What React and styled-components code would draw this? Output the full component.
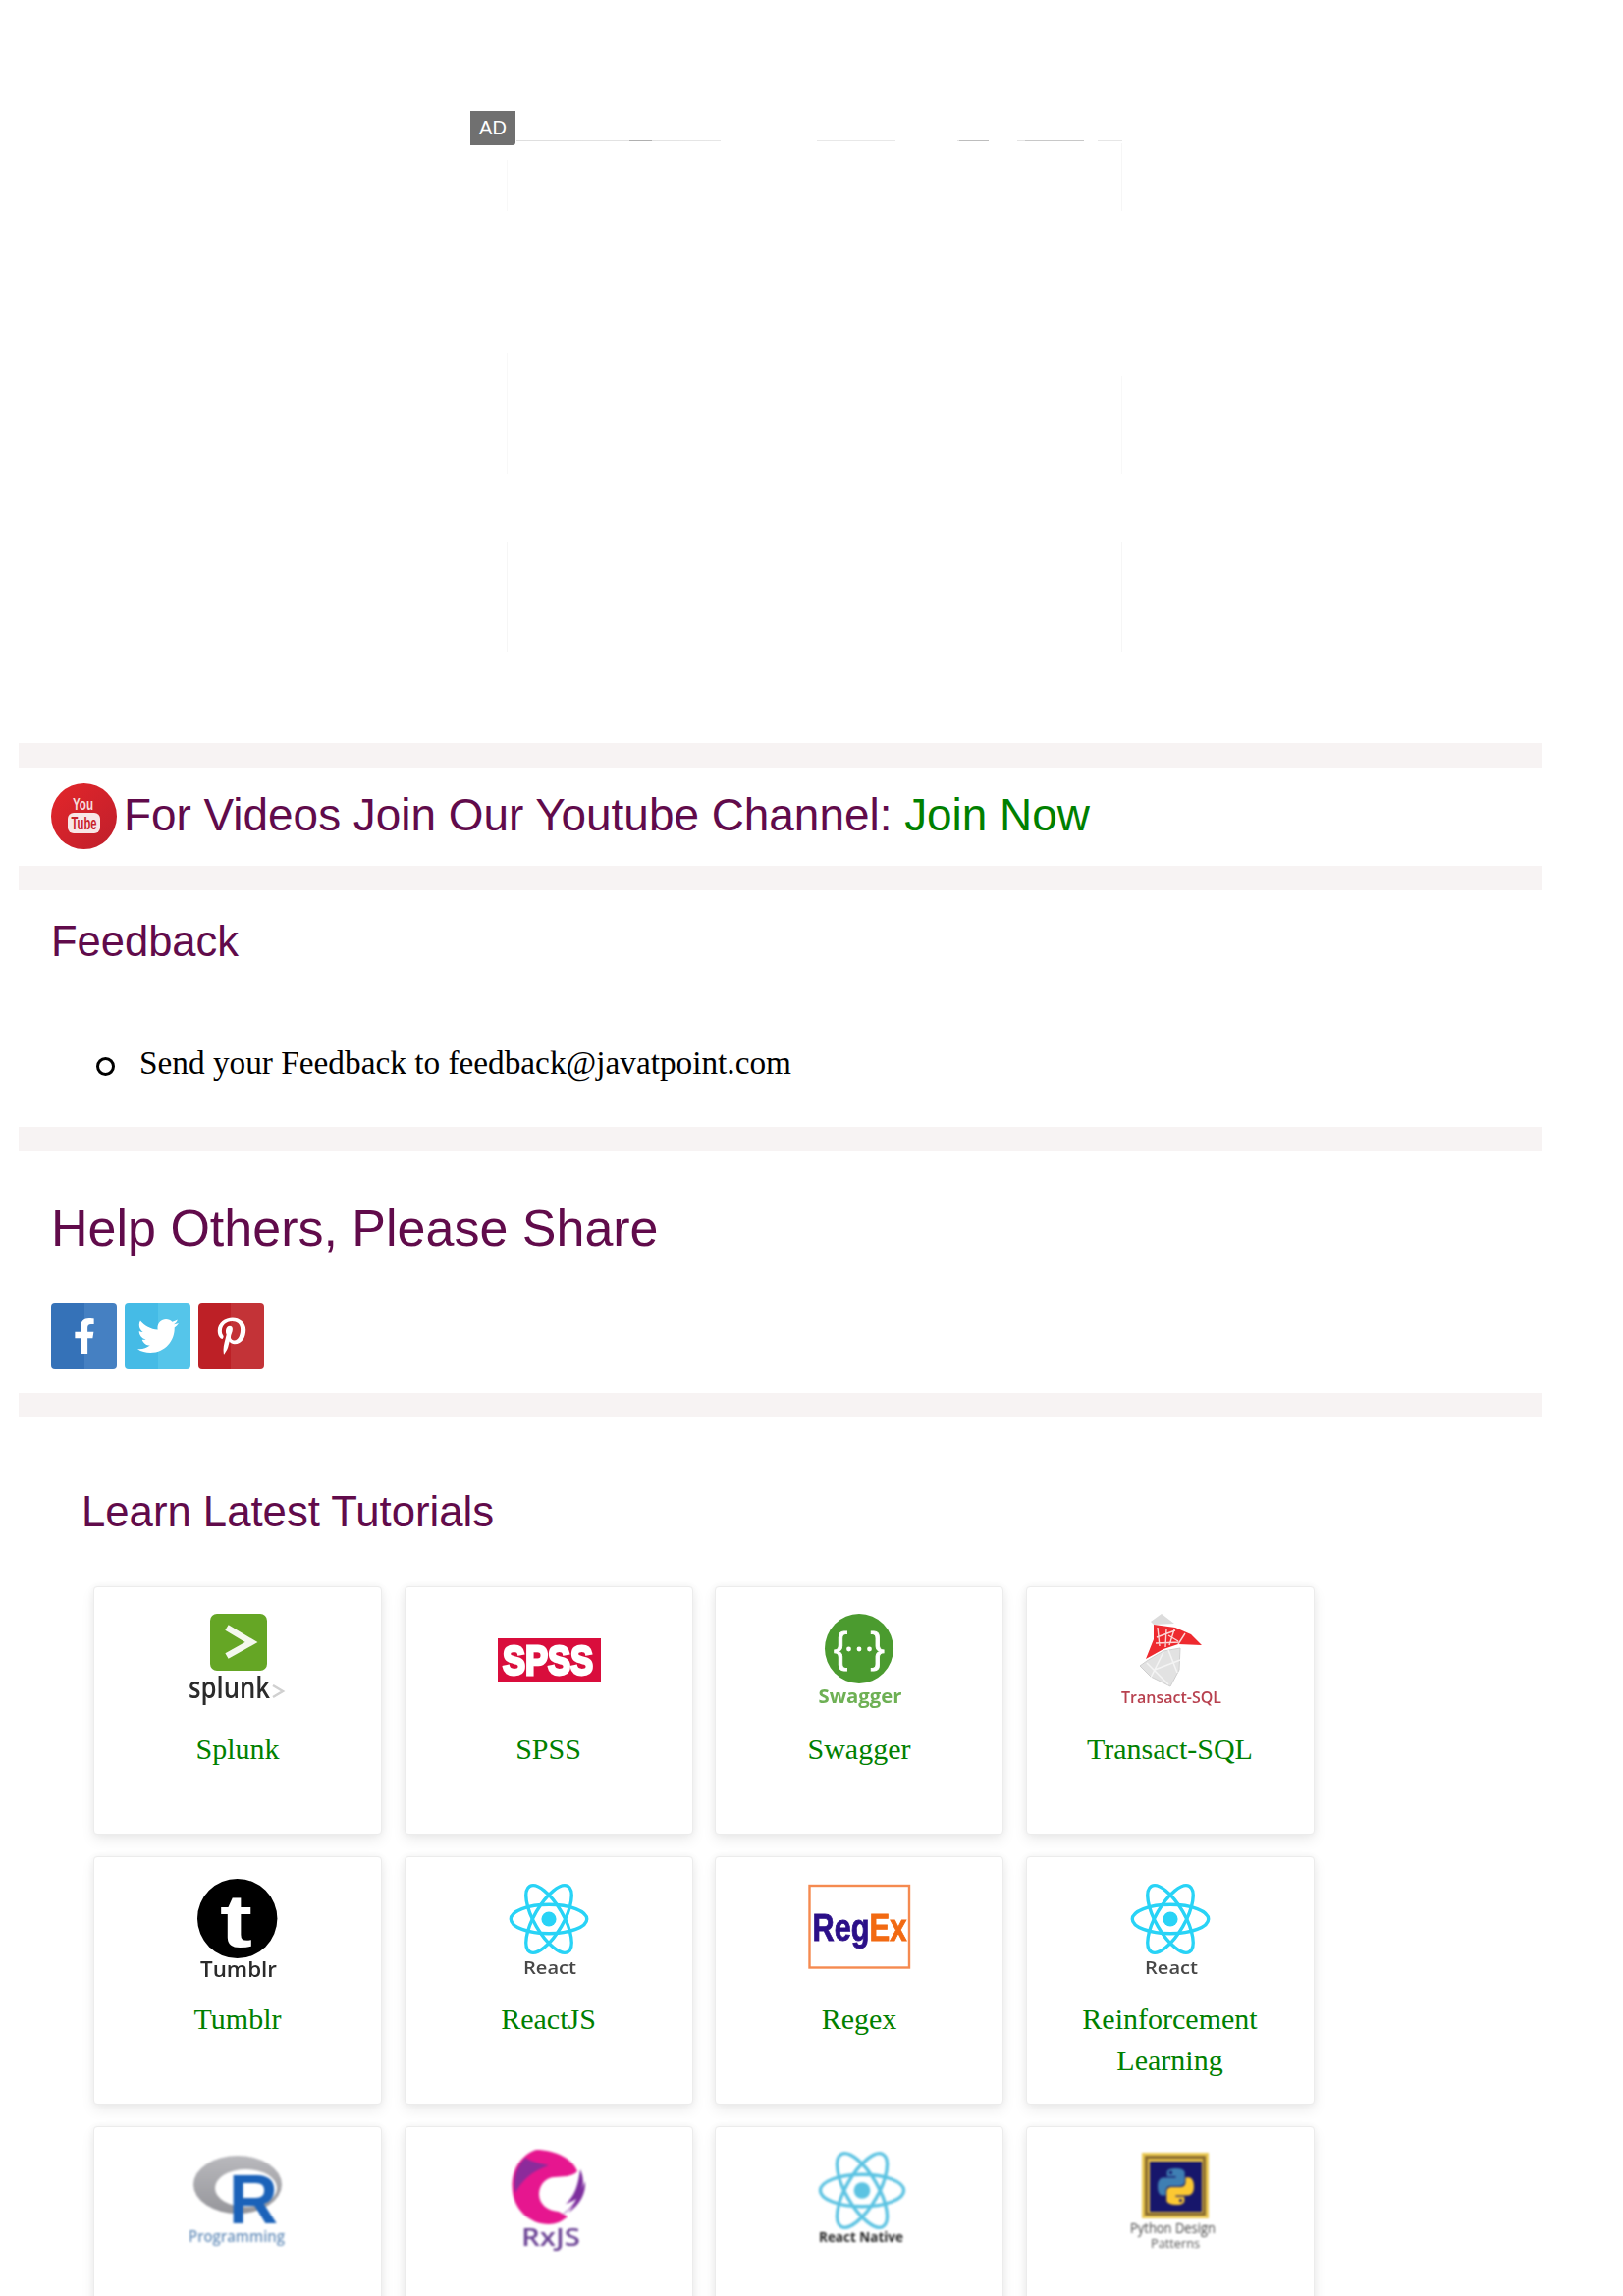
import React from "react";
import styled, { createGlobalStyle } from "styled-components";
import { FaFacebookF, FaTwitter, FaPinterestP } from "react-icons/fa";

const Global = createGlobalStyle`
  html, body { margin: 0; padding: 0; background: #fff; }
  * { box-sizing: border-box; }
`;

const Page = styled.div`
  height: 2339px;
  overflow: hidden;
  padding-top: 143px;
  font-family: "Liberation Serif", "Times New Roman", serif;
  color: #000;
`;

const AdWrap = styled.div`
  position: relative;
  width: 627px;
  height: 521px;
  margin: 0 0 93px 516px;
  background:
    linear-gradient(90deg,
      transparent 125px, #b0b0b0 125px, #b0b0b0 148px, transparent 148px,
      transparent 461px, #bdbdbd 461px, #bdbdbd 491px, transparent 491px,
      transparent 528px, #c8c8c8 528px, #c8c8c8 588px, transparent 588px) top left / 100% 1px no-repeat,
    linear-gradient(90deg,
      transparent 10px, #dedede 10px, #e6e6e6 218px, transparent 218px,
      transparent 316px, #e8e8e8 316px, #e8e8e8 396px, transparent 396px,
      transparent 459px, #e4e4e4 459px, #e4e4e4 488px, transparent 488px,
      transparent 520px, #e4e4e4 520px, #e4e4e4 574px, transparent 574px,
      transparent 602px, #e6e6e6 602px) top left / 100% 1px no-repeat,
    linear-gradient(180deg,
      transparent 20px, #f8f8f8 20px, #f8f8f8 72px, transparent 72px,
      transparent 217px, #f8f8f8 217px, #f8f8f8 340px, transparent 340px,
      transparent 409px, #f6f6f6 409px, #f6f6f6 521px) top left / 1px 100% no-repeat,
    linear-gradient(180deg,
      transparent 3px, #f6f6f6 3px, #f6f6f6 72px, transparent 72px,
      transparent 240px, #f8f8f8 240px, #f8f8f8 340px, transparent 340px,
      transparent 409px, #f6f6f6 409px, #f6f6f6 521px) top right / 1px 100% no-repeat;
`;

const AdBadge = styled.div`
  position: absolute;
  left: -37px;
  top: -30px;
  width: 46px;
  height: 35px;
  background: #707070;
  color: #fff;
  border-bottom-right-radius: 3px;
  font: 20px/35px "Liberation Sans", Arial, sans-serif;
  text-align: center;
`;

const Band = styled.div`
  width: 1552px;
  height: 25px;
  margin-left: 19px;
  background: #f7f3f3;
`;

const VideoRow = styled.div`
  display: flex;
  align-items: flex-start;
  height: 100px;
  padding: 16px 0 0 52px;
`;

const YoutubeMark = styled.svg`
  width: 67px;
  height: 67px;
  flex: none;
`;

const VideoText = styled.h2`
  margin: 6px 0 0 7px;
  font: 400 45.9px/52px "Liberation Sans", Arial, sans-serif;
  color: #610b4b;
  white-space: nowrap;
`;

const JoinLink = styled.a`
  color: #008000;
`;

const Heading = styled.h2`
  margin: ${(p) => p.$top}px 0 0 ${(p) => p.$left}px;
  font: 400 ${(p) => p.$size}px/1 "Liberation Sans", Arial, sans-serif;
  color: #610b4b;
`;

const FeedbackList = styled.ul`
  margin: 80px 0 44px 0;
  padding: 0 0 0 142px;
  list-style: none;
`;

const FeedbackItem = styled.li`
  position: relative;
  font-size: 33.3px;
  line-height: 42px;

  &::before {
    content: "";
    position: absolute;
    left: -44px;
    top: 15.5px;
    width: 13px;
    height: 13px;
    border: 3px solid #000;
    border-radius: 50%;
  }
`;

const ShareRow = styled.div`
  display: flex;
  gap: 8px;
  margin: 50px 0 24px 52px;
`;

const ShareButton = styled.a`
  display: flex;
  align-items: center;
  justify-content: center;
  width: 67px;
  height: 68px;
  border-radius: 4px;
  color: #fff;
  font-size: ${(p) => p.$icon}px;
  background: linear-gradient(90deg, ${(p) => p.$left} 50%, ${(p) => p.$right} 50%);
`;

const CardGrid = styled.div`
  display: grid;
  grid-template-columns: repeat(4, 294px);
  grid-auto-rows: 253px;
  column-gap: 22.5px;
  row-gap: 22px;
  margin: 55px 0 0 95px;
`;

const Card = styled.a`
  display: block;
  padding: 20px 12px 0;
  background: #fff;
  border: 1px solid #ececec;
  border-radius: 4px;
  box-shadow: 0 6px 14px rgba(0, 0, 0, 0.07), 0 0 7px rgba(0, 0, 0, 0.05);
  text-align: center;
`;

const LogoSvg = styled.svg`
  display: block;
  width: 160px;
  height: 110px;
  margin: 0 auto 14px;
  filter: blur(${(p) => p.$blur || 0.45}px);
  overflow: visible;
`;

const CardLabel = styled.div`
  font-size: 30px;
  line-height: 42px;
  color: #008000;
`;

const SANS = '"Open Sans", "Noto Sans", sans-serif';
const ARIAL = '"Liberation Sans", Arial, sans-serif';

const Atom = ({ cx, cy, k, color, sw }) => (
  <g fill="none" stroke={color} strokeWidth={sw}>
    <ellipse cx={cx} cy={cy} rx={11 * k} ry={4.2 * k} />
    <ellipse cx={cx} cy={cy} rx={11 * k} ry={4.2 * k} transform={`rotate(60 ${cx} ${cy})`} />
    <ellipse cx={cx} cy={cy} rx={11 * k} ry={4.2 * k} transform={`rotate(120 ${cx} ${cy})`} />
    <circle cx={cx} cy={cy} r={2.15 * k} fill={color} stroke="none" />
  </g>
);

const SplunkLogo = () => (
  <LogoSvg viewBox="162 1636 160 110">
    <rect x="214" y="1643" width="58" height="58" rx="7" fill="#65a625" />
    <polyline points="231,1657 256,1672 231,1686" fill="none" stroke="#f4f8ee" strokeWidth="6.5" />
    <text x="192" y="1729" fontFamily={SANS} fontSize="30" fontWeight="600" fill="#2b2b2b" textLength="83" lengthAdjust="spacingAndGlyphs">splunk</text>
    <polyline points="278,1716 288,1722 278,1728" fill="none" stroke="#d0d0d0" strokeWidth="2.5" />
  </LogoSvg>
);

const SpssLogo = () => (
  <LogoSvg viewBox="478 1636 160 110">
    <rect x="506" y="1668" width="105" height="44" fill="#d90d3c" />
    <text x="511" y="1705" fontFamily={ARIAL} fontSize="42" fontWeight="700" fill="#fff" stroke="#fff" strokeWidth="3" textLength="92" lengthAdjust="spacingAndGlyphs">SPSS</text>
  </LogoSvg>
);

const SwaggerLogo = () => (
  <LogoSvg viewBox="795.5 1636 160 110">
    <ellipse cx="875.5" cy="1678.5" rx="35" ry="35.5" fill="#4b9b2f" />
    <text x="849.5" y="1692" fontFamily={ARIAL} fontSize="43" fill="#fff" stroke="#fff" strokeWidth="0.8">{"{"}</text>
    <text x="887" y="1692" fontFamily={ARIAL} fontSize="43" fill="#fff" stroke="#fff" strokeWidth="0.8">{"}"}</text>
    <circle cx="865" cy="1679" r="2.4" fill="#fff" />
    <circle cx="875.5" cy="1679" r="2.4" fill="#fff" />
    <circle cx="886" cy="1679" r="2.4" fill="#fff" />
    <text x="834" y="1734" fontFamily={SANS} fontSize="20" fontWeight="700" fill="#6eb054" textLength="85" lengthAdjust="spacingAndGlyphs">Swagger</text>
  </LogoSvg>
);

const TransactLogo = () => (
  <LogoSvg viewBox="1112 1636 160 110">
    <path d="M1172 1651 L1183 1643 L1196 1653 L1175 1654 Z" fill="#dcdcdc" />
    <path d="M1168 1691 L1185 1681 L1202 1678 L1201 1700 L1192 1717 L1172 1707 L1161 1696 Z" fill="#e2e2e2" stroke="#cfcfcf" strokeWidth="1" />
    <path d="M1168 1693 L1190 1715 M1185 1682 L1172 1708 M1202 1690 L1176 1700 M1190 1680 L1199 1703" stroke="#f4f4f4" strokeWidth="1.6" fill="none" />
    <path d="M1175 1654 L1197 1657 L1213 1664 L1224 1675 L1200 1674 L1185 1679 L1167 1689 L1175 1669 Z" fill="#ee2a2f" />
    <path d="M1179 1657 L1181 1676 M1188 1658 L1187 1677 M1178 1667 L1197 1660 M1177 1673 L1202 1672 M1196 1659 L1191 1675 M1207 1663 L1200 1674 M1190 1665 L1200 1671" stroke="#fbd6d6" strokeWidth="1.4" fill="none" />
    <text x="1142" y="1734" fontFamily={SANS} fontSize="17" fontWeight="600" fill="#b8414f" textLength="102" lengthAdjust="spacingAndGlyphs">Transact-SQL</text>
  </LogoSvg>
);

const TumblrLogo = () => (
  <LogoSvg viewBox="162 1912 160 110">
    <ellipse cx="241.7" cy="1954.5" rx="40.7" ry="40.5" fill="#000" />
    <text x="224" y="1983" fontFamily={ARIAL} fontSize="76" fontWeight="700" fill="#fff" textLength="33" lengthAdjust="spacingAndGlyphs">t</text>
    <text x="204" y="2014" fontFamily={SANS} fontSize="22" fontWeight="600" fill="#2a2a2a" textLength="78" lengthAdjust="spacingAndGlyphs">Tumblr</text>
  </LogoSvg>
);

const ReactLogo = ({ center, textX }) => (
  <LogoSvg viewBox={`${center - 80} 1912 160 110`}>
    <Atom cx={center} cy={1955} k={3.52} color="#28d3f6" sw={3.4} />
    <text x={textX} y="2011" fontFamily={SANS} fontSize="18" fontWeight="600" fill="#484848" textLength="54" lengthAdjust="spacingAndGlyphs">React</text>
  </LogoSvg>
);

const RegexLogo = () => (
  <LogoSvg viewBox="795.5 1912 160 110">
    <rect x="825" y="1921" width="101.5" height="83.5" fill="none" stroke="#f58a50" strokeWidth="2.4" />
    <text x="828" y="1977" fontFamily={ARIAL} fontSize="38" fontWeight="700" fill="#2b0f88" stroke="#2b0f88" strokeWidth="0.9" textLength="58" lengthAdjust="spacingAndGlyphs">Reg</text>
    <text x="886" y="1977" fontFamily={ARIAL} fontSize="38" fontWeight="700" fill="#f26a12" stroke="#f26a12" strokeWidth="0.9" textLength="38" lengthAdjust="spacingAndGlyphs">Ex</text>
  </LogoSvg>
);

const RLogo = () => (
  <LogoSvg $blur={0.8} viewBox="162 2187 160 110">
    <defs>
      <linearGradient id="rRing" x1="0" y1="0" x2="0" y2="1">
        <stop offset="0" stopColor="#b9b9bd" />
        <stop offset="1" stopColor="#96969b" />
      </linearGradient>
    </defs>
    <ellipse cx="242" cy="2225.5" rx="45" ry="29.5" fill="url(#rRing)" />
    <ellipse cx="250.5" cy="2229" rx="31.5" ry="19" fill="#fff" />
    <text x="233" y="2265" fontFamily={ARIAL} fontSize="70" fontWeight="700" fill="#1b62b9" textLength="50" lengthAdjust="spacingAndGlyphs">R</text>
    <text x="192" y="2284" fontFamily={SANS} fontSize="16" fontWeight="600" fill="#6c93bd" textLength="98" lengthAdjust="spacingAndGlyphs">Programming</text>
  </LogoSvg>
);

const RxLogo = () => (
  <LogoSvg $blur={0.8} viewBox="478 2187 160 110">
    <path d="M587 2212 C583 2200 565 2190 545 2190 C530 2195 520 2210 520.6 2228 C521 2250 538 2266 558 2266 C565 2266 572 2263 577 2258 L568 2253 C556 2252 548 2245 548 2235 C548 2225 556 2218 564 2218 C572 2217 582 2218 587 2212 Z" fill="#e6168f" />
    <path d="M534 2198 C525 2208 521 2220 524 2234 C530 2222 540 2212 558 2206 C548 2204 540 2202 534 2198 Z" fill="#7b2f9d" opacity="0.85" />
    <path d="M590 2210 C597 2225 592 2244 570 2257 C577 2251 583 2247 586 2240 C581 2243 578 2244 575 2245 C582 2239 587 2232 590 2210 Z" fill="#7d2f9e" />
    <path d="M595 2222 C596 2234 590 2246 578 2254 C584 2246 590 2236 595 2222 Z" fill="#7d2f9e" />
    <text x="530" y="2288" fontFamily={SANS} fontSize="26" fontWeight="600" fill="#6d4596" textLength="60" lengthAdjust="spacingAndGlyphs">RxJS</text>
  </LogoSvg>
);

const NativeLogo = () => (
  <LogoSvg $blur={0.8} viewBox="795.5 2187 160 110">
    <Atom cx={878.5} cy={2231.5} k={3.87} color="#5cc3e2" sw={3.4} />
    <text x="834.5" y="2284" fontFamily={SANS} fontSize="15" fontWeight="700" fill="#222" textLength="86" lengthAdjust="spacingAndGlyphs">React Native</text>
  </LogoSvg>
);

const PYTHON_HALF = "M54.9 0C27 0 28.7 12.1 28.7 12.1v12.5h26.6v3.8H18.1S0 26.4 0 54.8s15.8 27.4 15.8 27.4h9.4V69s-.5-15.8 15.6-15.8h26.6s15 .2 15-14.5V14.4S84.9 0 54.9 0zM40 8.5a4.8 4.8 0 1 1 0 9.6 4.8 4.8 0 0 1 0-9.6z";

const PythonLogo = () => (
  <LogoSvg $blur={0.8} viewBox="1112 2187 160 110">
    <rect x="1163" y="2193" width="68" height="67" fill="#e9c74f" />
    <rect x="1166" y="2196" width="62" height="61" fill="#8a6c2e" />
    <rect x="1169" y="2199" width="56" height="55" fill="#e4bf48" />
    <rect x="1171" y="2202" width="53" height="51" fill="#17166b" />
    <g transform="translate(1179 2209) scale(0.336)">
      <path d={PYTHON_HALF} fill="#3f7fb3" fillRule="evenodd" />
      <path d={PYTHON_HALF} fill="#fcc832" fillRule="evenodd" transform="rotate(180 55 55)" />
    </g>
    <text x="1151" y="2275" fontFamily={SANS} fontSize="14" fill="#444" textLength="87" lengthAdjust="spacingAndGlyphs">Python Design</text>
    <text x="1172" y="2290" fontFamily={SANS} fontSize="13" fill="#555" textLength="50" lengthAdjust="spacingAndGlyphs">Patterns</text>
  </LogoSvg>
);

const CARDS = [
  { id: "splunk", label: "Splunk", logo: <SplunkLogo /> },
  { id: "spss", label: "SPSS", logo: <SpssLogo /> },
  { id: "swagger", label: "Swagger", logo: <SwaggerLogo /> },
  { id: "tsql", label: "Transact-SQL", logo: <TransactLogo /> },
  { id: "tumblr", label: "Tumblr", logo: <TumblrLogo /> },
  { id: "react", label: "ReactJS", logo: <ReactLogo center={558} textX={532} /> },
  { id: "regex", label: "Regex", logo: <RegexLogo /> },
  { id: "rl", label: "Reinforcement Learning", logo: <ReactLogo center={1192} textX={1166} /> },
  { id: "r", logo: <RLogo /> },
  { id: "rx", logo: <RxLogo /> },
  { id: "native", logo: <NativeLogo /> },
  { id: "python", logo: <PythonLogo /> },
];

export default function App() {
  return (
    <Page>
      <Global />
      <AdWrap>
        <AdBadge>AD</AdBadge>
      </AdWrap>
      <Band />
      <VideoRow>
        <YoutubeMark viewBox="0 0 67 67">
          <defs>
            <linearGradient id="ytRed" x1="0" y1="0" x2="1" y2="1">
              <stop offset="0" stopColor="#e3262a" />
              <stop offset="1" stopColor="#bf1f2c" />
            </linearGradient>
          </defs>
          <circle cx="33.5" cy="33.5" r="33.5" fill="url(#ytRed)" />
          <text x="22" y="27" fontFamily={ARIAL} fontSize="17" fontWeight="700" fill="#f6dcdc" textLength="21" lengthAdjust="spacingAndGlyphs">You</text>
          <rect x="17" y="30" width="33" height="21" rx="6" fill="#f8e6e6" />
          <text x="20.5" y="47" fontFamily={ARIAL} fontSize="18" fontWeight="700" fill="#c8222c" textLength="26" lengthAdjust="spacingAndGlyphs">Tube</text>
        </YoutubeMark>
        <VideoText>
          For Videos Join Our Youtube Channel: <JoinLink>Join Now</JoinLink>
        </VideoText>
      </VideoRow>
      <Band />
      <Heading $top={31} $left={52} $size={43.5}>Feedback</Heading>
      <FeedbackList>
        <FeedbackItem>Send your Feedback to feedback@javatpoint.com</FeedbackItem>
      </FeedbackList>
      <Band />
      <Heading $top={52} $left={52} $size={52}>Help Others, Please Share</Heading>
      <ShareRow>
        <ShareButton $left="#3572b8" $right="#4580c2" $icon={36}><FaFacebookF /></ShareButton>
        <ShareButton $left="#45bbe6" $right="#55c5ea" $icon={42}><FaTwitter /></ShareButton>
        <ShareButton $left="#bd2026" $right="#c33337" $icon={38}><FaPinterestP /></ShareButton>
      </ShareRow>
      <Band />
      <Heading $top={74} $left={83} $size={43.7}>Learn Latest Tutorials</Heading>
      <CardGrid>
        {CARDS.map((c) => (
          <Card key={c.id}>
            {c.logo}
            {c.label && <CardLabel>{c.label}</CardLabel>}
          </Card>
        ))}
      </CardGrid>
    </Page>
  );
}
